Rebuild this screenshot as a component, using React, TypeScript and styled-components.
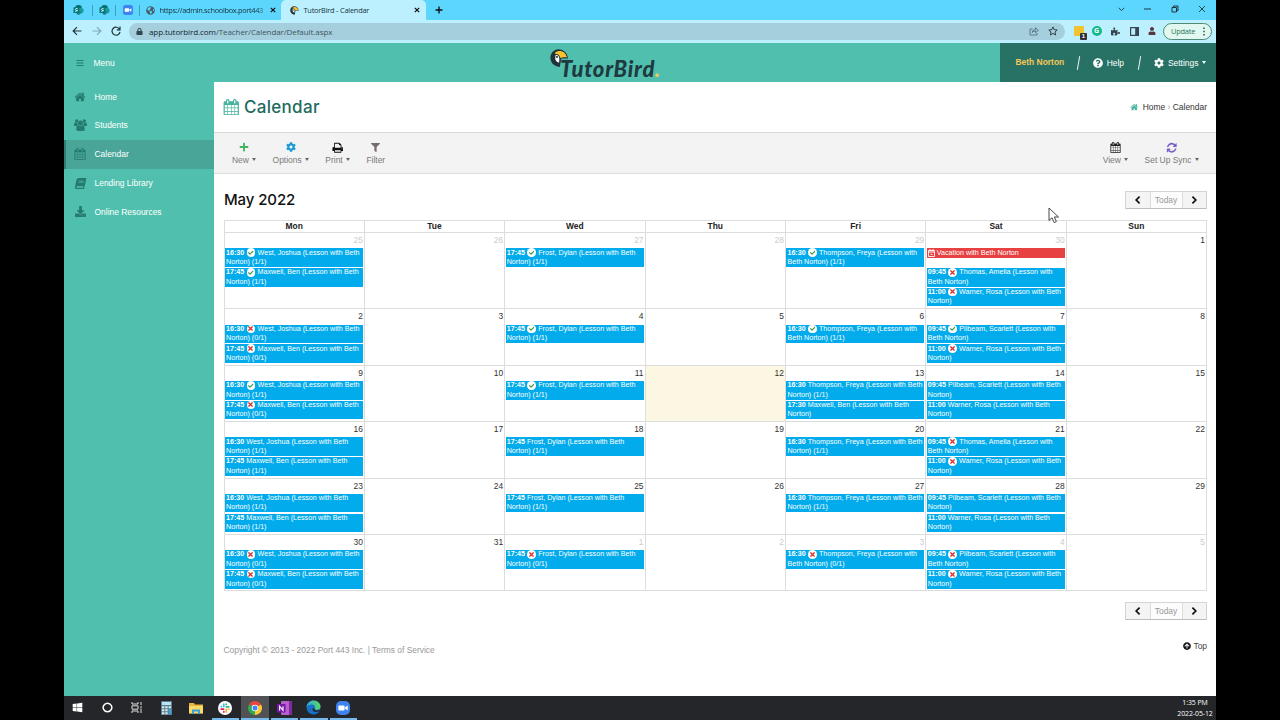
import React from "react";
import styled, { createGlobalStyle } from "styled-components";
import {
  FaBook, FaDownload, FaPlus, FaCog, FaFilter,
  FaQuestionCircle, FaArrowCircleUp, FaBars, FaLock, FaPuzzlePiece, FaUser,
  FaGlobeAmericas, FaCheck, FaTimes, FaWindows,
} from "react-icons/fa";

const Global = createGlobalStyle`
  * { box-sizing: border-box; }
  html, body { margin: 0; background: #000; }
  body { width: 1280px; height: 720px; overflow: hidden; font: 8.45px "Liberation Sans", Arial, sans-serif; }
  svg { display: block; flex: none; }
`;

const TEAL = "#51bfae";

const Desktop = styled.div`
  position: relative; width: 1152px; height: 720px; margin: 0 auto;
  display: flex; flex-direction: column; background: #fff; overflow: hidden;
`;

/* Browser frame */
const TabStrip = styled.div`
  height: 20px; flex: none; display: flex; align-items: center; background: #5dd6fd;
  font: 7.4px "Open Sans", sans-serif; color: #17333d;
`;
const PinnedTab = styled.div<{ $w: number }>`
  width: ${(p) => p.$w}px; height: 11px; display: flex; align-items: center; justify-content: center;
  border-right: 1px solid #3f9dbd;
`;
const Tab = styled.div<{ $active?: boolean; $w: number; $pad: number }>`
  width: ${(p) => p.$w}px; height: 20px; display: flex; align-items: center; white-space: nowrap;
  padding: 0 ${(p) => (p.$active ? 6 : 5)}px 0 ${(p) => p.$pad}px; border-radius: 5px 5px 0 0;
  background: ${(p) => (p.$active ? "#bdf0ff" : "transparent")};
`;
const TabLabel = styled.span<{ $fade?: boolean; $ls: number }>`
  flex: 1; margin-left: 4.5px; letter-spacing: ${(p) => p.$ls}px;
  ${(p) => p.$fade && "mask-image: linear-gradient(90deg, #000 88%, rgba(0,0,0,.15));"}
`;
const WindowButtons = styled.div`
  margin-left: auto; display: flex; align-items: center; gap: 19.5px; padding: 0 10px 3px 0;
`;
const AddressRow = styled.div`
  height: 22.5px; flex: none; display: flex; align-items: center; background: #bdf0ff; padding: 0 4px 0 8px;
`;
const NavIcons = styled.div` display: flex; gap: 9.5px; width: 57px; `;
const Omnibox = styled.div`
  width: 936px; height: 17px; border-radius: 9px; background: #a6cfdd;
  display: flex; align-items: center; padding: 0 9px 0 7px; color: #3c5660;
  font: 8px "Open Sans", sans-serif; letter-spacing: -0.08px;
  b { font-weight: 400; color: #10262e; }
  span { flex: 1; margin-left: 6px; }
`;
const ShareIcons = styled.div` display: flex; gap: 9px; margin-right: -2px; `;
const Extensions = styled.div`
  flex: 1; display: flex; align-items: center; gap: 9.5px; justify-content: flex-end;
`;
const Note = styled.div`
  position: relative; width: 10px; height: 10px; background: #f2c230; border-radius: 1px; margin-right: -1px;
  i { position: absolute; right: -3px; bottom: -4px; width: 7px; height: 7px; background: #2f3336; color: #fff;
    font: bold 6px/7px "Liberation Sans", sans-serif; text-align: center; border-radius: 1px; }
`;
const Grammar = styled.div`
  width: 10px; height: 10px; border-radius: 50%; background: #12b886; color: #fff; margin-left: -1px;
  font: bold 7px/10px "Open Sans", sans-serif; text-align: center;
`;
const Update = styled.div`
  height: 17px; width: 49px; border: 1px solid #4e8b77; border-radius: 9px; background: #e0f8ef; color: #28735a;
  font: 7.4px "Open Sans", sans-serif; display: flex; align-items: center; justify-content: space-between; padding: 0 6px 0 7px;
  margin-left: -2.5px; letter-spacing: -0.2px;
`;

/* Application header */
const AppHeader = styled.header`
  height: 39.5px; flex: none; display: flex; align-items: stretch; background: ${TEAL}; color: #fff;
`;
const MenuToggle = styled.div`
  width: 486px; display: flex; align-items: center; gap: 9.5px; padding: 0.5px 0 0 12px; color: #fff;
  svg { color: #1d7c6c; }
`;
const Logo = styled.div`
  position: relative; width: 120px; height: 39px;
  span { position: absolute; left: 10px; top: 12.5px; white-space: nowrap; color: #1e3a40;
    font: italic 900 22px/28px "Lato", sans-serif; letter-spacing: 0.75px; }
  em { color: #e9c75b; margin-left: -0.5px; }
  svg { position: absolute; left: 0; top: 6.5px; }
`;
const UserBar = styled.div`
  margin-left: auto; width: 216px; background: #277265; display: flex; align-items: center;
  padding: 1px 0 0 15.5px; white-space: nowrap;
  strong { color: #f6c85a; width: 62px; margin-top: -1px; }
`;
const Slash = styled.i<{ $gap: number }>`
  width: 1.2px; height: 14px; background: #e6f3f0; transform: rotate(10deg); margin-right: ${(p) => p.$gap}px;
`;
const UserItem = styled.div<{ $w?: number }>`
  display: flex; align-items: center; gap: 3.5px; width: ${(p) => (p.$w ? p.$w + "px" : "auto")};
`;
const Caret = styled.i<{ $light?: boolean }>`
  border: solid transparent; border-width: 3px 2.6px 0; border-top-color: ${(p) => (p.$light ? "#fff" : "#666")};
`;

/* Body */
const Body = styled.div` height: 614px; flex: none; display: flex; `;
const Sidebar = styled.nav` width: 150px; flex: none; background: ${TEAL}; padding-top: 0.3px; `;
const SideItem = styled.div<{ $active?: boolean }>`
  height: 28.8px; display: flex; align-items: center; color: #fff;
  border-left: 2px solid ${(p) => (p.$active ? "#2f7f72" : "transparent")};
  background: ${(p) => (p.$active ? "#48a598" : "transparent")};
`;
const SideIcon = styled.span`
  width: 28.5px; padding-right: 0.5px; display: flex; justify-content: center; color: #247c6e;
`;
const LeaningBook = styled(FaBook)` transform: skewX(-12deg); `;
const Page = styled.main` flex: 1; display: flex; flex-direction: column; background: #fff; `;
const TitleRow = styled.div`
  height: 51px; display: flex; align-items: center; padding: 0 9px 0 9.5px; border-bottom: 1px solid #d8d8d8;
`;
const Title = styled.h1`
  margin: 0; display: flex; align-items: center; gap: 4.5px; color: #226a5d;
  font: 500 17px "Inter", sans-serif; letter-spacing: 0.3px;
  svg { color: #47b39f; margin-left: -0.5px; }
`;
const Crumbs = styled.div`
  margin-left: auto; display: flex; align-items: center; color: #333; white-space: pre;
  svg { color: #47b39f; margin-right: 4.5px; } i { font-style: normal; color: #999; }
`;
const Toolbar = styled.div`
  height: 41px; display: flex; background: #f3f3f3; border-bottom: 1px solid #dedede; padding: 0 8px 0 18px;
`;
const Tool = styled.div<{ $gap?: number; $push?: boolean }>`
  display: flex; flex-direction: column; align-items: center; color: #7a7a7a; padding-top: 8.3px;
  margin-right: ${(p) => p.$gap ?? 16.7}px; ${(p) => p.$push && "margin-left: auto;"}
`;
const ToolIcon = styled.span` height: 12px; display: flex; align-items: center; `;
const ToolLabel = styled.span`
  display: flex; align-items: center; gap: 3px; line-height: 10px; margin-top: 1.5px; white-space: nowrap;
`;
const MonthRow = styled.div`
  height: 46px; display: flex; align-items: center; justify-content: space-between; padding: 6px 9px 0 10px;
`;
const Month = styled.h2`
  margin: 0; font: 500 15px "Inter", sans-serif; color: #111; letter-spacing: -0.1px; padding-bottom: 2px;
`;
const Pager = styled.div`
  display: flex; height: 18px; border: 1px solid #d4d4d4; border-bottom-color: #bdbdbd; border-radius: 1px; width: 82px;
`;
const PagerPart = styled.span<{ $mid?: boolean }>`
  flex: ${(p) => (p.$mid ? "0 0 33px" : "1")}; display: flex; align-items: center; justify-content: center;
  background: ${(p) => (p.$mid ? "#fcfcfc" : "#f4f4f4")}; color: ${(p) => (p.$mid ? "#999" : "#111")};
  ${(p) => p.$mid && "border: solid #ddd; border-width: 0 1px;"}
`;

/* Calendar */
const Grid = styled.div`
  margin-left: 9.5px; width: 983.5px; display: grid; grid-template-columns: repeat(7, 1fr);
  grid-template-rows: 12.2px 76.2px repeat(5, 56.4px); border: solid #ddd; border-width: 1px 0 0 1px;
`;
const DayHead = styled.div`
  border: solid #ddd; border-width: 0 1px 1px 0; font-weight: 700; text-align: center; line-height: 11px; color: #222;
`;
const Cell = styled.div<{ $today?: boolean }>`
  border: solid #ddd; border-width: 0 1px 1px 0; padding: 0 1px 0 0.5px; min-width: 0;
  background: ${(p) => (p.$today ? "#fbf7e2" : "#fff")};
`;
const DayNo = styled.div<{ $dim?: boolean }>`
  height: 15.3px; line-height: 15px; text-align: right; color: ${(p) => (p.$dim ? "#ccc" : "#333")};
`;
const Event = styled.div<{ $red?: boolean }>`
  height: ${(p) => (p.$red ? 9.2 : 18.6)}px; margin-bottom: ${(p) => (p.$red ? 10.4 : 1.1)}px;
  background: ${(p) => (p.$red ? "#e84141" : "#02abeb")}; color: #fff; font-size: 7.15px; line-height: 9px;
  padding-left: 1px; white-space: nowrap;
`;
const Line = styled.div` display: flex; align-items: center; height: 9.4px; gap: 2px; `;
const Badge = styled.span`
  width: 8.6px; height: 8.6px; border-radius: 50%; background: #fff; display: flex; align-items: center; justify-content: center;
  margin: -1px 0.3px 0 0.4px;
`;
const LowerPager = styled.div` display: flex; justify-content: flex-end; padding: 11px 9px 0 0; `;
const Footer = styled.footer`
  display: flex; justify-content: space-between; padding: 25px 9px 0 9.5px; color: #999; line-height: 10px;
  letter-spacing: -0.01px;
  span:last-child { display: flex; align-items: center; gap: 2px; color: #444; margin-top: -4.5px; height: 10px; }
  span:last-child svg { color: #111; }
`;

/* Taskbar */
const Taskbar = styled.div` height: 24px; flex: none; display: flex; background: #25262a; color: #fff; `;
const TaskSlot = styled.div<{ $open?: boolean; $active?: boolean }>`
  width: 27.5px; margin-right: 2px; display: flex; align-items: center; justify-content: center;
  background: ${(p) => (p.$active ? "#505256" : "transparent")};
  border-bottom: 2px solid ${(p) => (p.$open ? "#76b9ed" : "transparent")}; padding-top: 1px;
`;
const Clock = styled.div`
  margin-left: auto; width: 42px; text-align: center; font: 6.9px/11px "Open Sans", sans-serif; padding-top: 1px;
  letter-spacing: -0.05px; white-space: nowrap;
`;
const Pointer = styled.svg` position: absolute; left: 984px; top: 207px; `;

const glyphs = {
  home: "M1472 992v480q0 26-19 45t-45 19h-384v-384h-256v384h-384q-26 0-45-19t-19-45v-480q0-1 .5-3t.5-3l575-474 575 474q1 2 1 6zm223-69l-62 74q-8 9-21 11h-3q-13 0-21-7l-692-577-692 577q-12 8-24 7-13-2-21-11l-62-74q-8-10-7-23.5t11-21.5l719-599q32-26 76-26t76 26l244 204v-195q0-14 9-23t23-9h192q14 0 23 9t9 23v408l219 182q10 8 11 21.5t-7 23.5z",
  print: "M448 1536h896v-256h-896v256zm0-640h896v-384h-160q-40 0-68-28t-28-68v-160h-640v640zm1152 64q0-26-19-45t-45-19-45 19-19 45 19 45 45 19 45-19 19-45zm128 0v416q0 13-9.5 22.5t-22.5 9.5h-224v160q0 40-28 68t-68 28h-960q-40 0-68-28t-28-68v-160h-224q-13 0-22.5-9.5t-9.5-22.5v-416q0-79 56.5-135.5t135.5-56.5h64v-544q0-40 28-68t68-28h672q40 0 88 20t76 48l152 152q28 28 48 76t20 88v256h64q79 0 135.5 56.5t56.5 135.5z",
  refresh: "M1639 1056q0 5-1 7-64 268-268 434.5t-478 166.5q-146 0-282.5-55t-243.5-157l-129 129q-19 19-45 19t-45-19-19-45v-448q0-26 19-45t45-19h448q26 0 45 19t19 45-19 45l-137 137q71 66 161 102t187 36q134 0 250-65t186-179q11-17 53-117 8-23 30-23h192q13 0 22.5 9.5t9.5 22.5zm25-800v448q0 26-19 45t-45 19h-448q-26 0-45-19t-19-45 19-45l138-138q-148-137-349-137-134 0-250 65t-186 179q-11 17-53 117-8 23-30 23h-199q-13 0-22.5-9.5t-9.5-22.5v-7q65-268 270-434.5t480-166.5q146 0 284 55.5t245 156.5l130-129q19-19 45-19t45 19 19 45z",
  calendar: "M192 1664h288v-288h-288v288zm352 0h320v-288h-320v288zm-352-352h288v-320h-288v320zm352 0h320v-320h-320v320zm-352-384h288v-288h-288v288zm736 736h320v-288h-320v288zm-384-736h320v-288h-320v288zm768 736h288v-288h-288v288zm-384-352h320v-320h-320v320zm-352-864v-288q0-13-9.5-22.5t-22.5-9.5h-64q-13 0-22.5 9.5t-9.5 22.5v288q0 13 9.5 22.5t22.5 9.5h64q13 0 22.5-9.5t9.5-22.5zm736 864h288v-320h-288v320zm-384-384h320v-288h-320v288zm384 0h288v-288h-288v288zm32-480v-288q0-13-9.5-22.5t-22.5-9.5h-64q-13 0-22.5 9.5t-9.5 22.5v288q0 13 9.5 22.5t22.5 9.5h64q13 0 22.5-9.5t9.5-22.5zm384-64v1280q0 52-38 90t-90 38h-1408q-52 0-90-38t-38-90v-1280q0-52 38-90t90-38h128v-96q0-66 47-113t113-47h64q66 0 113 47t47 113v96h384v-96q0-66 47-113t113-47h64q66 0 113 47t47 113v96h128q52 0 90 38t38 90z",
};
const Glyph = ({ name, size, color }: { name: keyof typeof glyphs; size: number; color?: string }) => (
  <svg width={size} height={size} viewBox="0 0 1792 1792" fill={color ?? "currentColor"}><path d={glyphs[name]} /></svg>
);
const People = () => (
  <svg width="13" height="12" viewBox="0 0 13 12" fill="currentColor">
    <circle cx="2.7" cy="2" r="1.7" /><circle cx="10.3" cy="2" r="1.7" /><circle cx="6.5" cy="4" r="2.5" />
    <path d="M0 6.2C0 4.6.4 3.6 1.2 3.6L3.4 4C3.4 5 3.7 5.7 4.2 6.2L2.7 7.1H1Q0 7 0 6.2ZM13 6.2C13 4.6 12.6 3.6 11.8 3.6L9.6 4C9.6 5 9.3 5.7 8.8 6.2L10.3 7.1H12Q13 7 13 6.2Z" />
    <path d="M2.2 10.2C2.2 7.6 3 6.2 4.6 6.2 5.8 7.3 7.2 7.3 8.4 6.2 10 6.2 10.8 7.6 10.8 10.2Q10.8 12 9.1 12H3.9Q2.2 12 2.2 10.2Z" />
  </svg>
);
const Stroke = ({ d, w = 12, h = 12, sw = 1.2, color = "#23343a" }: { d: string; w?: number; h?: number; sw?: number; color?: string }) => (
  <svg width={w} height={h} viewBox={`0 0 ${w} ${h}`} fill="none" stroke={color} strokeWidth={sw}><path d={d} /></svg>
);
const SharePoint = () => (
  <svg width="11" height="10" viewBox="0 0 11 10">
    <circle cx="5.5" cy="3.4" r="3.4" fill="#036c70" /><circle cx="7.8" cy="5.6" r="2.8" fill="#1a9ba1" />
    <circle cx="5.5" cy="7.6" r="2.3" fill="#20848a" /><rect x="0.5" y="2.2" width="5.8" height="5.8" rx="0.5" fill="#03787c" />
    <path d="M4.7 3.8Q2.4 3 2.4 4.3T4.2 5.4 2.2 6.5" stroke="#fff" strokeWidth=".8" fill="none" />
  </svg>
);
const BirdHead = ({ size }: { size: number }) => (
  <svg width={size} height={size} viewBox="0 0 18 18">
    <path d="M8 .3C12 .2 17 3 17.5 9.2H11L9.5 17.4C3 16.8.4 12.5.4 8.5.4 4 4 .4 8 .3Z" fill="#20343a" />
    <path d="M5.2 3.4C8.6.6 15 1.6 16.5 8.2 13 7.4 11.4 8.6 9.8 8.4 9.2 5.8 8 4.8 5 5Z" fill="#f9c22e" />
    <path d="M5.4 6C7.6 5.4 8.9 7.2 9.1 9.6L8.8 13.4C6.5 12.8 4.8 10.7 5.1 8.7Z" fill="#fff" />
    <circle cx="6.8" cy="7.8" r="1" fill="#20343a" />
  </svg>
);
const ZoomLogo = ({ size, round }: { size: number; round?: boolean }) => (
  <svg width={size} height={size} viewBox="0 0 14 14">
    <rect width="14" height="14" rx={round ? 5 : 3.5} fill="#3f83ee" />
    <rect x="2.4" y="4.4" width="6.2" height="5.2" rx="1.2" fill="#fff" /><path d="M9 6.4 11.7 4.6V9.4L9 7.6Z" fill="#fff" />
  </svg>
);
const Chrome = () => (
  <svg width="14" height="14" viewBox="0 0 14 14">
    <path d="M7 7 .94 3.5A7 7 0 0 1 13.06 3.5Z" fill="#e8453c" />
    <path d="M7 7 13.06 3.5A7 7 0 0 1 7 14Z" fill="#fcc934" />
    <path d="M7 7V14A7 7 0 0 1 .94 3.5Z" fill="#2da94f" />
    <circle cx="7" cy="7" r="3.3" fill="#fff" /><circle cx="7" cy="7" r="2.5" fill="#4285f4" />
  </svg>
);
const Slack = () => (
  <svg width="14" height="14" viewBox="0 0 14 14" strokeWidth="1.7" strokeLinecap="round">
    <circle cx="7" cy="7" r="7" fill="#fff" />
    <path d="M5.8 3.1V5.5M3.2 5.6H3.6" stroke="#36c5f0" /><path d="M8.3 5.8H10.8M8.2 3.2V3.5" stroke="#2eb67d" />
    <path d="M8.2 8.4V10.9M10.5 8.3H10.8" stroke="#ecb22e" /><path d="M3.2 8.2H5.6M5.8 10.5V10.9" stroke="#e01e5a" />
  </svg>
);
const Edge = () => (
  <svg width="15" height="15" viewBox="0 0 15 15">
    <defs><linearGradient id="wave" x1="0" x2="1"><stop stopColor="#2fa9e8" /><stop offset="1" stopColor="#5bd75b" /></linearGradient></defs>
    <circle cx="7.5" cy="7.5" r="7" fill="#1673c4" />
    <path d="M.6 7.2C1 2.8 4.2.5 7.6.5 12 .5 14.6 3.8 14.5 6.6 14.4 9 12.2 10 10.4 9.8 8.6 9.6 8.6 8.8 9 8.2 9.6 6.4 8.2 4.7 5.8 4.6 3.2 4.6 1.2 6 .6 7.2Z" fill="url(#wave)" />
    <path d="M6.6 8C6 10.4 7.6 12 9.8 12 11.4 12 12.8 11.6 14 10.6L13.2 9.8C10.8 11 8.4 10 8.2 8.4Z" fill="#25262a" />
  </svg>
);
const OneNote = () => (
  <svg width="15" height="14" viewBox="0 0 15 14">
    <rect x="4" y="0" width="11" height="14" rx="1" fill="#b95fd0" /><path d="M12 0h3v14h-3z" fill="#7d2a9c" />
    <rect x="0" y="3" width="8.6" height="8.6" rx=".8" fill="#7719aa" />
    <path d="M2.6 9.4V5.2L6 9.4V5.2" stroke="#fff" strokeWidth="1.1" fill="none" />
  </svg>
);
const Calculator = () => (
  <svg width="11" height="14" viewBox="0 0 11 14">
    <rect width="11" height="14" fill="#5e7d8d" /><rect x="1" y="1" width="9" height="3" fill="#b9e6f7" />
    <path d="M1 5.2h2.3v2H1zm3.3 0h2.3v2H4.3zm3.4 0H10v2H7.7zM1 8.2h2.3v2H1zm3.3 0h2.3v2H4.3zM1 11.2h2.3v2H1zm3.3 0h2.3v2H4.3z" fill="#d7eef6" />
    <path d="M7.7 8.2H10v5H7.7z" fill="#37a3d8" />
  </svg>
);
const Explorer = () => (
  <svg width="14" height="12" viewBox="0 0 14 12">
    <path d="M0 1h5l1 1.5h8V11H0z" fill="#e8b33a" /><path d="M0 4h14v7.6H0z" fill="#fbd968" />
    <path d="M3 12V7.5h8V12H9V9.4H5V12z" fill="#3f9fdb" />
  </svg>
);
const TaskView = () => (
  <svg width="12" height="11" viewBox="0 0 12 11" fill="none" stroke="#ddd" strokeWidth="1">
    <path d="M1 0V2H7V0M1 11V9H7V11M1 3.8H7V7.2H1ZM10 0V3M10 6.5V11M9 5H11" />
  </svg>
);

type Entry = [time: string, mark: "y" | "n" | "", first: string, second: string];
type Day = { no: number; dim?: boolean; today?: boolean; vacation?: boolean; events?: Entry[] };

const west = (m: Entry[1], c: string): Entry => ["16:30", m, "West, Joshua (Lesson with Beth", `Norton) (${c})`];
const maxwell = (m: Entry[1], c: string): Entry => ["17:45", m, "Maxwell, Ben (Lesson with Beth", `Norton) (${c})`];
const frost = (m: Entry[1], c: string): Entry => ["17:45", m, "Frost, Dylan (Lesson with Beth", `Norton) (${c})`];
const thompson = (m: Entry[1], c: string): Entry =>
  m ? ["16:30", m, "Thompson, Freya (Lesson with", `Beth Norton) (${c})`] : ["16:30", m, "Thompson, Freya (Lesson with Beth", `Norton) (${c})`];
const thomas: Entry = ["09:45", "n", "Thomas, Amelia (Lesson with", "Beth Norton)"];
const warner = (m: Entry[1]): Entry => ["11:00", m, "Warner, Rosa (Lesson with Beth", "Norton)"];
const pilbeam = (m: Entry[1]): Entry =>
  m ? ["09:45", m, "Pilbeam, Scarlett (Lesson with", "Beth Norton)"] : ["09:45", m, "Pilbeam, Scarlett (Lesson with Beth", "Norton)"];

const days: Day[] = [
  { no: 25, dim: true, events: [west("y", "1/1"), maxwell("y", "1/1")] }, { no: 26, dim: true },
  { no: 27, dim: true, events: [frost("y", "1/1")] }, { no: 28, dim: true },
  { no: 29, dim: true, events: [thompson("y", "1/1")] },
  { no: 30, dim: true, vacation: true, events: [thomas, warner("n")] }, { no: 1 },
  { no: 2, events: [west("n", "0/1"), maxwell("n", "0/1")] }, { no: 3 }, { no: 4, events: [frost("y", "1/1")] }, { no: 5 },
  { no: 6, events: [thompson("y", "1/1")] }, { no: 7, events: [pilbeam("y"), warner("n")] }, { no: 8 },
  { no: 9, events: [west("y", "1/1"), maxwell("n", "0/1")] }, { no: 10 }, { no: 11, events: [frost("y", "1/1")] },
  { no: 12, today: true },
  { no: 13, events: [thompson("", "1/1"), ["17:30", "", "Maxwell, Ben (Lesson with Beth", "Norton)"]] },
  { no: 14, events: [pilbeam(""), warner("")] }, { no: 15 },
  { no: 16, events: [west("", "1/1"), maxwell("", "1/1")] }, { no: 17 }, { no: 18, events: [frost("", "1/1")] }, { no: 19 },
  { no: 20, events: [thompson("", "1/1")] }, { no: 21, events: [thomas, warner("n")] }, { no: 22 },
  { no: 23, events: [west("", "1/1"), maxwell("", "1/1")] }, { no: 24 }, { no: 25, events: [frost("", "1/1")] }, { no: 26 },
  { no: 27, events: [thompson("", "1/1")] }, { no: 28, events: [pilbeam(""), warner("")] }, { no: 29 },
  { no: 30, events: [west("n", "0/1"), maxwell("n", "0/1")] }, { no: 31 }, { no: 1, dim: true, events: [frost("n", "0/1")] },
  { no: 2, dim: true }, { no: 3, dim: true, events: [thompson("n", "0/1")] },
  { no: 4, dim: true, events: [pilbeam("n"), warner("n")] }, { no: 5, dim: true },
];

const Chevron = ({ d }: { d: string }) => <Stroke w={8} h={10} d={d} sw={1.7} color="#111" />;
const CalendarPager = () => (
  <Pager>
    <PagerPart><Chevron d="M5.6 1.6 2.2 5 5.6 8.4" /></PagerPart><PagerPart $mid>Today</PagerPart>
    <PagerPart><Chevron d="M2.4 1.6 5.8 5 2.4 8.4" /></PagerPart>
  </Pager>
);

const Lesson = ({ entry: [time, mark, first, second] }: { entry: Entry }) => (
  <Event>
    <Line>
      <b>{time}</b>
      {mark && <Badge>{mark === "y" ? <FaCheck size={5.5} color="#3a9a48" /> : <FaTimes size={7} color="#d62f2f" />}</Badge>}
      <span>{first}</span>
    </Line>
    <Line>{second}</Line>
  </Event>
);

export default function App() {
  return (
    <Desktop>
      <Global />
      <TabStrip>
        <PinnedTab $w={29}><SharePoint /></PinnedTab>
        <PinnedTab $w={23}><SharePoint /></PinnedTab>
        <PinnedTab $w={24}><ZoomLogo size={10} /></PinnedTab>
        <Tab $w={141} $pad={6}>
          <FaGlobeAmericas size={9} color="#46606b" />
          <TabLabel $fade $ls={-0.32}>https://admin.schoolbox.port443</TabLabel>
          <Stroke w={6} h={6} d="M.8.8 5.2 5.2M5.2.8.8 5.2" color="#111" />
        </Tab>
        <Tab $w={145} $pad={9} $active>
          <BirdHead size={9} />
          <TabLabel $ls={-0.22}>TutorBird - Calendar</TabLabel>
          <Stroke w={6} h={6} d="M.8.8 5.2 5.2M5.2.8.8 5.2" color="#111" />
        </Tab>
        <Tab $w={30} $pad={9}><Stroke w={8} h={8} d="M4 .5V7.5M.5 4H7.5" color="#111" sw={1.4} /></Tab>
        <WindowButtons>
          <Stroke w={7} h={8} d="M.7 2.8 3.5 5.6 6.3 2.8" sw={0.9} />
          <Stroke w={7} h={8} d="M0 4H7" sw={1} />
          <Stroke w={8} h={8} d="M1 2.5H5.5V7H1ZM2.5 2.5V1H7V5.5H5.5" sw={1} />
          <Stroke w={8} h={8} d="M1 1 7 7M7 1 1 7" sw={0.9} />
        </WindowButtons>
      </TabStrip>
      <AddressRow>
        <NavIcons>
          <Stroke w={10} h={10} d="M9.5 5H1.5M5 1.2 1.2 5 5 8.8" />
          <Stroke w={10} h={10} d="M.5 5H8.5M5 1.2 8.8 5 5 8.8" color="#7fa9b8" />
          <Stroke w={10} h={10} d="M8.5 3.2A4 4 0 1 0 9 5.8M9 .6V3.8H5.8" />
        </NavIcons>
        <Omnibox>
          <FaLock size={7} color="#33474f" /><span><b>app.tutorbird.com</b>/Teacher/Calendar/Default.aspx</span>
          <ShareIcons>
            <Stroke w={10} h={10} d="M3.5 3H1V9H8V7M3 6.5Q3.5 3.6 6.5 3.6V1.8L9.4 4.4 6.5 6.6V5Q4.5 5 3 6.5" sw={0.7} color="#3c5660" />
            <Stroke w={10} h={10} d="M5 .9 6.2 3.7 9.2 4 7 6 7.6 9 5 7.4 2.4 9 3 6 .8 4 3.8 3.7Z" sw={0.9} />
          </ShareIcons>
        </Omnibox>
        <Extensions>
          <Note><i>1</i></Note>
          <Grammar>G</Grammar>
          <FaPuzzlePiece size={9} color="#35474f" />
          <svg width="9" height="9" viewBox="0 0 9 9"><path d="M.6.6H8.4V8.4H.6Z" fill="none" stroke="#35474f" strokeWidth="1.2" /><path d="M5.2 0H9V9H5.2Z" fill="#35474f" /></svg>
          <FaUser size={8} color="#5a3540" />
          <Update>Update<Stroke w={2} h={9} d="M1 .5V2M1 3.8V5.3M1 7V8.5" sw={1.5} color="#1d5e48" /></Update>
        </Extensions>
      </AddressRow>
      <AppHeader>
        <MenuToggle><FaBars size={8} />Menu</MenuToggle>
        <Logo><BirdHead size={18.5} /><span>TutorBird<em>.</em></span></Logo>
        <UserBar>
          <strong>Beth Norton</strong>
          <Slash $gap={14.5} />
          <UserItem $w={46}><FaQuestionCircle size={10} />Help</UserItem>
          <Slash $gap={14} />
          <UserItem><FaCog size={10} />Settings<Caret $light /></UserItem>
        </UserBar>
      </AppHeader>
      <Body>
        <Sidebar>
          <SideItem><SideIcon><Glyph name="home" size={12} /></SideIcon>Home</SideItem>
          <SideItem><SideIcon><People /></SideIcon>Students</SideItem>
          <SideItem $active><SideIcon><Glyph name="calendar" size={12} /></SideIcon>Calendar</SideItem>
          <SideItem><SideIcon><LeaningBook size={11} /></SideIcon>Lending Library</SideItem>
          <SideItem><SideIcon><FaDownload size={11} /></SideIcon>Online Resources</SideItem>
        </Sidebar>
        <Page>
          <TitleRow>
            <Title><Glyph name="calendar" size={16.5} />Calendar</Title>
            <Crumbs><Glyph name="home" size={8.5} />Home<i> › </i>Calendar</Crumbs>
          </TitleRow>
          <Toolbar>
            <Tool><ToolIcon><FaPlus size={10} color="#43b55f" /></ToolIcon><ToolLabel>New<Caret /></ToolLabel></Tool>
            <Tool><ToolIcon><FaCog size={10} color="#1c9ad6" /></ToolIcon><ToolLabel>Options<Caret /></ToolLabel></Tool>
            <Tool><ToolIcon><Glyph name="print" size={11.5} color="#111" /></ToolIcon><ToolLabel>Print<Caret /></ToolLabel></Tool>
            <Tool><ToolIcon><FaFilter size={9} color="#766c6c" /></ToolIcon><ToolLabel>Filter</ToolLabel></Tool>
            <Tool $push><ToolIcon><Glyph name="calendar" size={11} color="#222" /></ToolIcon><ToolLabel>View<Caret /></ToolLabel></Tool>
            <Tool $gap={9.5}><ToolIcon><Glyph name="refresh" size={11.5} color="#7a62c4" /></ToolIcon><ToolLabel>Set Up Sync<Caret /></ToolLabel></Tool>
          </Toolbar>
          <MonthRow><Month>May 2022</Month><CalendarPager /></MonthRow>
          <Grid>
            {["Mon", "Tue", "Wed", "Thu", "Fri", "Sat", "Sun"].map((d) => <DayHead key={d}>{d}</DayHead>)}
            {days.map((d, i) => (
              <Cell key={i} $today={d.today}>
                <DayNo $dim={d.dim}>{d.no}</DayNo>
                {d.vacation && <Event $red><Line><svg width="7" height="8" viewBox="0 0 7 8" fill="none" stroke="#fff" strokeWidth=".9"><path d="M.5 1.5H6.5V7.5H.5ZM.5 3H6.5M2 0V2M5 0V2M2.5 5.3H4.5" /></svg>Vacation with Beth Norton</Line></Event>}
                {d.events?.map((e, j) => <Lesson key={j} entry={e} />)}
              </Cell>
            ))}
          </Grid>
          <LowerPager><CalendarPager /></LowerPager>
          <Footer>
            <span>Copyright © 2013 - 2022 Port 443 Inc. | Terms of Service</span>
            <span><FaArrowCircleUp size={8} />Top</span>
          </Footer>
        </Page>
      </Body>
      <Taskbar>
        <TaskSlot><FaWindows size={11} /></TaskSlot>
        <TaskSlot><Stroke w={11} h={11} d="M5.5 1.2A4.3 4.3 0 1 1 5.49 1.2Z" color="#fff" sw={1.5} /></TaskSlot>
        <TaskSlot><TaskView /></TaskSlot>
        <TaskSlot><Calculator /></TaskSlot>
        <TaskSlot><Explorer /></TaskSlot>
        <TaskSlot $open><Slack /></TaskSlot>
        <TaskSlot $open $active><Chrome /></TaskSlot>
        <TaskSlot $open><OneNote /></TaskSlot>
        <TaskSlot $open><Edge /></TaskSlot>
        <TaskSlot $open><ZoomLogo size={14} round /></TaskSlot>
        <Clock>1:35 PM<br />2022-05-12</Clock>
      </Taskbar>
      <Pointer width="12" height="17" viewBox="0 0 12 17"><path d="M1 1V13.5L4 10.8 6.2 15.6 8.4 14.6 6.3 10H10.5Z" fill="#fff" stroke="#333" strokeWidth=".9" /></Pointer>
    </Desktop>
  );
}
